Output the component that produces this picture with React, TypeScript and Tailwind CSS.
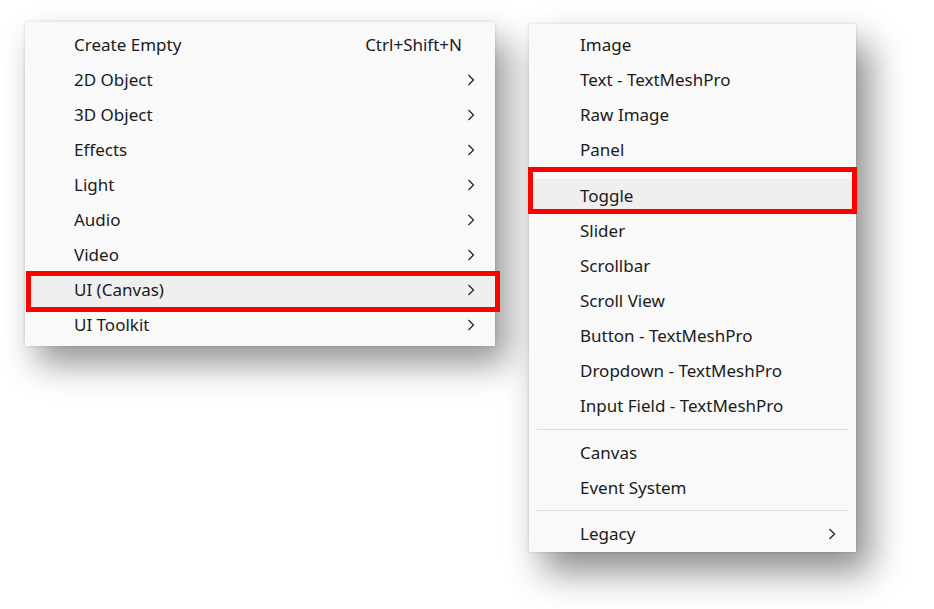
import React from "react";

type Item = {
  label: string;
  shortcut?: string;
  sub?: boolean;
  active?: boolean;
  divider?: boolean;
};

const createMenu: Item[] = [
  { label: "Create Empty", shortcut: "Ctrl+Shift+N" },
  { label: "2D Object", sub: true },
  { label: "3D Object", sub: true },
  { label: "Effects", sub: true },
  { label: "Light", sub: true },
  { label: "Audio", sub: true },
  { label: "Video", sub: true },
  { label: "UI (Canvas)", sub: true, active: true },
  { label: "UI Toolkit", sub: true },
];

const uiMenu: Item[] = [
  { label: "Image" },
  { label: "Text - TextMeshPro" },
  { label: "Raw Image" },
  { label: "Panel" },
  { label: "Toggle", active: true, divider: true },
  { label: "Slider" },
  { label: "Scrollbar" },
  { label: "Scroll View" },
  { label: "Button - TextMeshPro" },
  { label: "Dropdown - TextMeshPro" },
  { label: "Input Field - TextMeshPro" },
  { label: "Canvas", divider: true },
  { label: "Event System" },
  { label: "Legacy", sub: true, divider: true },
];

function Chevron() {
  return (
    <svg width="8" height="12" viewBox="0 0 8 12" className="text-[#1f1f1f]">
      <polyline
        points="1.5,1 6.5,6 1.5,11"
        fill="none"
        stroke="currentColor"
        strokeWidth="1.2"
      />
    </svg>
  );
}

function Row({ item, textLeft }: { item: Item; textLeft: string }) {
  return (
    <div
      className={`relative flex h-[35px] items-center pr-[20px] ${textLeft} ${
        item.active ? "bg-[#efefef]" : ""
      }`}
    >
      <span className="flex-1">{item.label}</span>
      {item.shortcut && <span className="pr-[13px]">{item.shortcut}</span>}
      {item.sub && <Chevron />}
    </div>
  );
}

function Divider({ hidden }: { hidden?: boolean }) {
  return (
    <div className="flex h-[11.5px] items-center px-[8px]">
      <div className={`h-px w-full ${hidden ? "" : "bg-[#dcdcdc]"}`} />
    </div>
  );
}

export default function App() {
  return (
    <div
      className="flex h-[609px] w-[934px] items-start bg-white text-[17px] text-[#1b1b1b]"
      style={{ fontFamily: '"Noto Sans", "Open Sans", sans-serif' }}
    >
      {/* GameObject create menu */}
      <div className="relative ml-[25px] mt-[22px] w-[470px] bg-[#f9f9f9] pt-[5px] pb-[4px] shadow-[0_0_3px_rgba(0,0,0,0.15),12px_18px_32px_rgba(0,0,0,0.42)]">
        {createMenu.map((item) => (
          <div key={item.label} className="relative">
            <Row item={item} textLeft="pl-[49px]" />
            {item.active && (
              <div className="pointer-events-none absolute -top-[1px] -bottom-[5px] left-[1px] -right-[5px] border-[5px] border-[#ff0000]" />
            )}
          </div>
        ))}
      </div>

      {/* UI (Canvas) submenu */}
      <div className="relative ml-[34px] mt-[24px] w-[327px] bg-[#f9f9f9] pt-[3px] shadow-[0_0_3px_rgba(0,0,0,0.15),14px_20px_34px_rgba(0,0,0,0.45)]">
        {uiMenu.map((item) => (
          <div key={item.label} className="relative">
            {item.divider && <Divider hidden={item.active} />}
            <Row item={item} textLeft="pl-[51px]" />
            {item.active && (
              <div className="pointer-events-none absolute top-0 bottom-0 -left-[1px] -right-[1px] border-[5px] border-[#ff0000]" />
            )}
          </div>
        ))}
      </div>
    </div>
  );
}
